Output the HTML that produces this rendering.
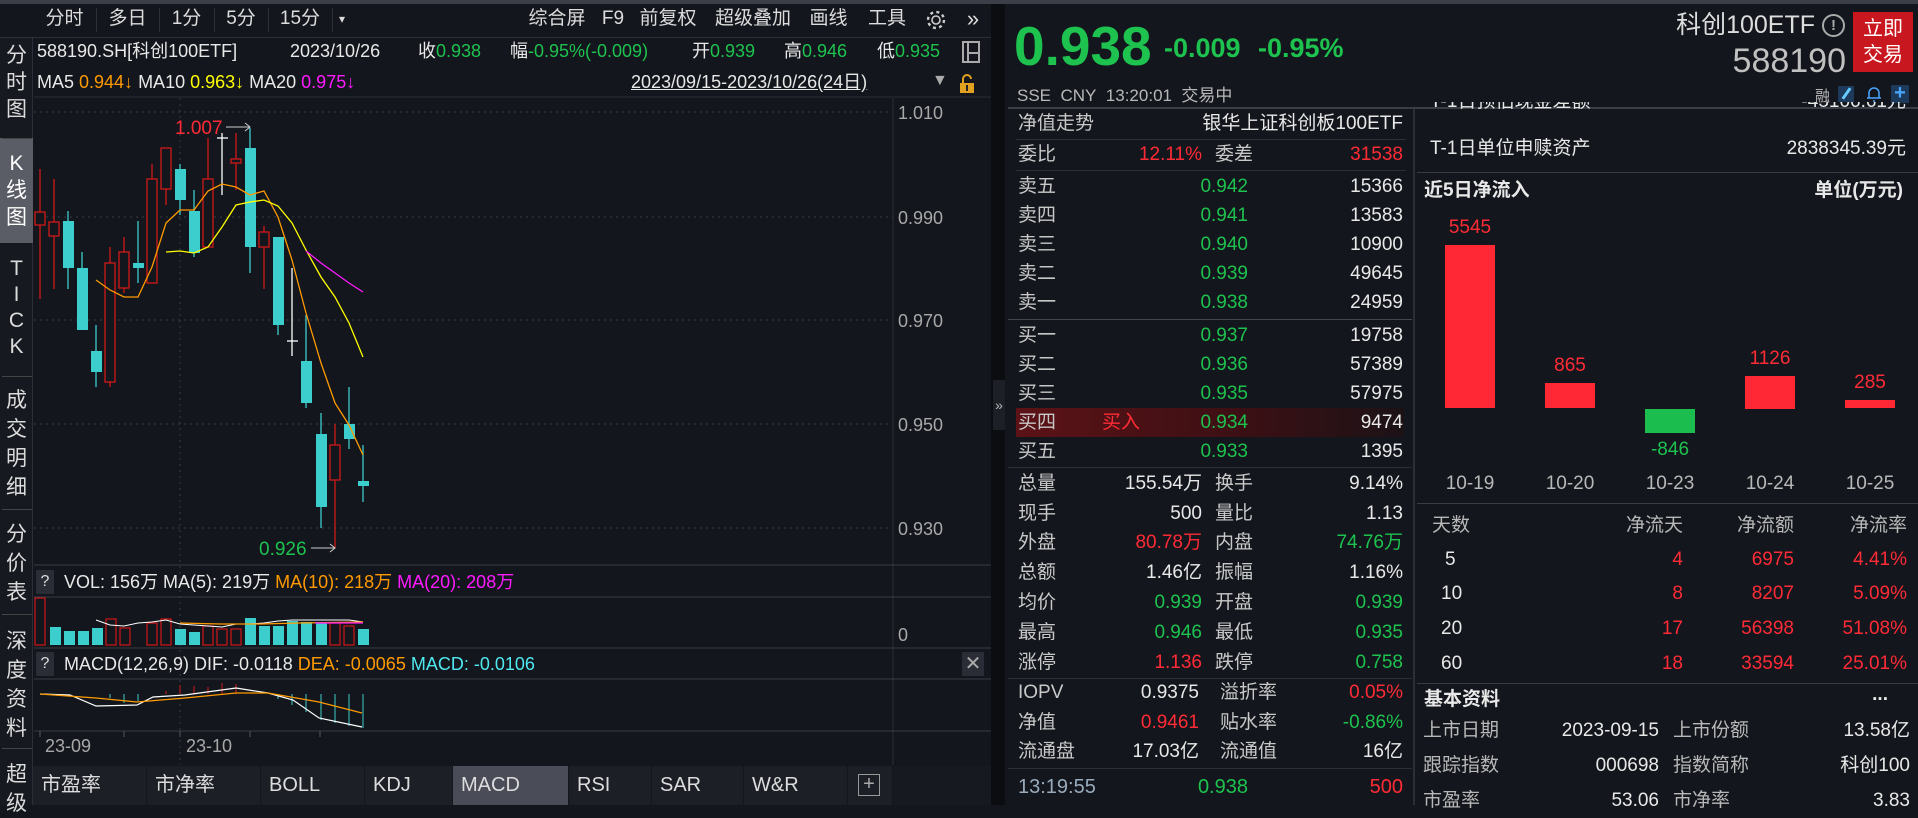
<!DOCTYPE html>
<html><head><meta charset="utf-8"><style>
*{margin:0;padding:0;box-sizing:border-box}
body{width:1918px;height:805px;background:#13161c;color:#d6d6d6;font-family:"Liberation Sans","Noto Sans CJK SC",sans-serif;position:relative;overflow:hidden}
.a{position:absolute;white-space:nowrap}
.g{color:#1ec24f}.r{color:#ff2b36}.w{color:#e8e8e8}.gy{color:#b8b8b8}.o{color:#ff9a00}.y{color:#ffff00}.m{color:#ff1aff}.c{color:#50e8f0}
.row{position:absolute;left:1005px;width:410px;height:30px;line-height:30px;font-size:19px}
.row span{position:absolute}
.row .l{left:13px;color:#c8c8c8}
.row .v1{right:167px}
.row .v2{right:12px}
.row .l2{left:210px;color:#c8c8c8}
.row .s1{right:213px}
.tb{position:absolute;top:4px;height:30px;line-height:30px;font-size:19px;color:#dcdcdc;text-align:center}
.side{position:absolute;left:0;width:33px;font-size:21px;color:#dcdcdc;text-align:center;line-height:27px}
.tab{position:absolute;top:766px;height:39px;line-height:39px;font-size:20px;color:#dcdcdc;background:#1c1f26;padding-left:8px}
.rt{position:absolute;font-size:19px;line-height:30px;white-space:nowrap}
</style></head><body>

<!-- top strip -->
<div class="a" style="left:0;top:0;width:1918px;height:4px;background:#3c3f48"></div>
<div class="a" style="left:0;top:37px;width:991px;height:1px;background:#2c2f37"></div>

<!-- toolbar -->
<div class="tb" style="left:33px;width:63px">分时</div>
<div class="tb" style="left:96px;width:63px">多日</div>
<div class="tb" style="left:159px;width:55px">1分</div>
<div class="tb" style="left:214px;width:54px">5分</div>
<div class="tb" style="left:268px;width:64px">15分</div>
<div class="tb" style="left:332px;width:20px;font-size:12px">▾</div>
<div class="a" style="left:96px;top:8px;width:1px;height:24px;background:#2c2f37"></div>
<div class="a" style="left:159px;top:8px;width:1px;height:24px;background:#2c2f37"></div>
<div class="a" style="left:214px;top:8px;width:1px;height:24px;background:#2c2f37"></div>
<div class="a" style="left:268px;top:8px;width:1px;height:24px;background:#2c2f37"></div>
<div class="a" style="left:332px;top:8px;width:1px;height:24px;background:#2c2f37"></div>
<div class="tb" style="left:520px;width:74px">综合屏</div>
<div class="tb" style="left:596px;width:34px">F9</div>
<div class="tb" style="left:631px;width:74px">前复权</div>
<div class="tb" style="left:706px;width:94px">超级叠加</div>
<div class="tb" style="left:802px;width:53px">画线</div>
<div class="tb" style="left:858px;width:58px">工具</div>
<svg class="a" style="left:925px;top:9px" width="22" height="22" viewBox="0 0 22 22"><circle cx="11" cy="11" r="4" fill="none" stroke="#ccc" stroke-width="1.6"/><circle cx="11" cy="11" r="8" fill="none" stroke="#ccc" stroke-width="2.4" stroke-dasharray="3 3.3"/></svg>
<div class="tb" style="left:958px;width:30px;font-size:22px">»</div>

<!-- sidebar -->
<div class="a" style="left:0;top:38px;width:33px;height:767px;background:#16191f;border-right:1px solid #2c2f37"></div>
<div class="side" style="top:42px">分<br>时<br>图</div>
<div class="a" style="left:0;top:138px;width:33px;height:105px;background:#5a5d66"></div>
<div class="side" style="top:150px;color:#fff">K<br>线<br>图</div>
<div class="side" style="top:256px;line-height:26px">T<br>I<br>C<br>K</div>
<div class="side" style="top:386px;line-height:29px">成<br>交<br>明<br>细</div>
<div class="side" style="top:520px;line-height:29px">分<br>价<br>表</div>
<div class="side" style="top:627px;line-height:29px">深<br>度<br>资<br>料</div>
<div class="side" style="top:760px;line-height:29px">超<br>级</div>
<div class="a" style="left:2px;top:138px;width:30px;height:1px;background:#444"></div>
<div class="a" style="left:2px;top:376px;width:30px;height:1px;background:#444"></div>
<div class="a" style="left:2px;top:509px;width:30px;height:1px;background:#444"></div>
<div class="a" style="left:2px;top:614px;width:30px;height:1px;background:#444"></div>
<div class="a" style="left:2px;top:748px;width:30px;height:1px;background:#444"></div>

<!-- info rows -->
<div class="a w" style="left:37px;top:40px;font-size:18px;line-height:22px">588190.SH[科创100ETF]</div>
<div class="a w" style="left:290px;top:40px;font-size:18px;line-height:22px">2023/10/26</div>
<div class="a w" style="left:418px;top:40px;font-size:18px;line-height:22px">收<span class="g">0.938</span></div>
<div class="a w" style="left:510px;top:40px;font-size:18px;line-height:22px">幅<span class="g">-0.95%(-0.009)</span></div>
<div class="a w" style="left:692px;top:40px;font-size:18px;line-height:22px">开<span class="g">0.939</span></div>
<div class="a w" style="left:784px;top:40px;font-size:18px;line-height:22px">高<span class="g">0.946</span></div>
<div class="a w" style="left:877px;top:40px;font-size:18px;line-height:22px">低<span class="g">0.935</span></div>
<svg class="a" style="left:962px;top:41px" width="18" height="22"><rect x="1" y="1" width="16" height="20" fill="none" stroke="#aaa" stroke-width="2"/><line x1="6" y1="1" x2="6" y2="21" stroke="#aaa" stroke-width="2"/><line x1="6" y1="12" x2="17" y2="12" stroke="#aaa" stroke-width="2"/></svg>
<div class="a w" style="left:37px;top:71px;font-size:18px;line-height:22px">MA5 <span class="o">0.944↓</span> MA10 <span class="y">0.963↓</span> MA20 <span class="m">0.975↓</span></div>
<div class="a w" style="left:631px;top:71px;font-size:18px;line-height:22px;text-decoration:underline">2023/09/15-2023/10/26(24日)</div>
<div class="a" style="left:932px;top:72px;font-size:16px;color:#aaa">▼</div>
<svg class="a" style="left:959px;top:74px" width="16" height="20"><path d="M4 9 V5 a4 4 0 0 1 8 0" fill="none" stroke="#e0a020" stroke-width="2"/><rect x="1" y="9" width="14" height="10" fill="#e0a020"/><rect x="7" y="11" width="2" height="6" fill="#222"/></svg>

<!-- chart -->
<svg class="a" style="left:0;top:0" width="991" height="805">
<g stroke="#3a3d45" stroke-dasharray="2 4" stroke-width="1">
<line x1="34" y1="112" x2="893" y2="112"/><line x1="34" y1="217" x2="893" y2="217"/><line x1="34" y1="320" x2="893" y2="320"/><line x1="34" y1="424" x2="893" y2="424"/><line x1="34" y1="528" x2="893" y2="528"/>
<line x1="180" y1="98" x2="180" y2="765"/>
</g>
<line x1="893" y1="98" x2="893" y2="765" stroke="#2c2f37"/>
<line x1="34" y1="97" x2="991" y2="97" stroke="#2c2f37"/>
<line x1="34" y1="565" x2="991" y2="565" stroke="#3a3d45"/>
<line x1="34" y1="597" x2="991" y2="597" stroke="#3a3d45"/>
<line x1="34" y1="648" x2="991" y2="648" stroke="#3a3d45"/>
<line x1="34" y1="679" x2="991" y2="679" stroke="#3a3d45"/>
<line x1="34" y1="731" x2="991" y2="731" stroke="#3a3d45"/>
<g font-size="18" fill="#a8a8a8" font-family="Liberation Sans,sans-serif">
<text x="898" y="119">1.010</text><text x="898" y="224">0.990</text><text x="898" y="327">0.970</text><text x="898" y="431">0.950</text><text x="898" y="535">0.930</text>
<text x="898" y="641">0</text>
<text x="45" y="752">23-09</text><text x="186" y="752">23-10</text>
</g>
<g stroke="#555" ><line x1="40" y1="731" x2="40" y2="737"/><line x1="124" y1="731" x2="124" y2="737"/><line x1="180" y1="731" x2="180" y2="737"/><line x1="250" y1="731" x2="250" y2="737"/><line x1="320" y1="731" x2="320" y2="737"/></g>
<!-- candles -->
<g stroke-width="1.3">
<line x1="40" y1="169" x2="40" y2="299" stroke="#d01818"/><rect x="35" y="212" width="10" height="13" fill="#13161c" stroke="#d01818"/>
<line x1="54" y1="179" x2="54" y2="289" stroke="#d01818"/><rect x="49" y="222" width="10" height="14" fill="#13161c" stroke="#d01818"/>
<line x1="68" y1="211" x2="68" y2="289" stroke="#3ccdcd"/><rect x="63" y="221" width="11" height="47" fill="#3ccdcd"/>
<line x1="82" y1="252" x2="82" y2="330" stroke="#3ccdcd"/><rect x="77" y="268" width="11" height="62" fill="#3ccdcd"/>
<line x1="96" y1="325" x2="96" y2="387" stroke="#3ccdcd"/><rect x="91" y="351" width="11" height="21" fill="#3ccdcd"/>
<line x1="110" y1="247" x2="110" y2="387" stroke="#d01818"/><rect x="105" y="263" width="10" height="119" fill="#13161c" stroke="#d01818"/>
<line x1="124" y1="237" x2="124" y2="293" stroke="#d01818"/><rect x="119" y="252" width="10" height="36" fill="#13161c" stroke="#d01818"/>
<line x1="138" y1="221" x2="138" y2="283" stroke="#3ccdcd"/><rect x="133" y="263" width="11" height="5" fill="#3ccdcd"/>
<line x1="152" y1="164" x2="152" y2="283" stroke="#d01818"/><rect x="147" y="179" width="10" height="104" fill="#13161c" stroke="#d01818"/>
<line x1="166" y1="148" x2="166" y2="205" stroke="#d01818"/><rect x="161" y="148" width="10" height="41" fill="#13161c" stroke="#d01818"/>
<line x1="180" y1="164" x2="180" y2="215" stroke="#3ccdcd"/><rect x="175" y="169" width="11" height="31" fill="#3ccdcd"/>
<line x1="194" y1="190" x2="194" y2="257" stroke="#3ccdcd"/><rect x="189" y="211" width="11" height="42" fill="#3ccdcd"/>
<line x1="208" y1="138" x2="208" y2="247" stroke="#d01818"/><rect x="203" y="179" width="10" height="68" fill="#13161c" stroke="#d01818"/>
<line x1="222" y1="133" x2="222" y2="195" stroke="#fff"/><line x1="217" y1="138" x2="228" y2="138" stroke="#fff"/>
<line x1="236" y1="133" x2="236" y2="190" stroke="#d01818"/><rect x="231" y="159" width="10" height="4" fill="#13161c" stroke="#d01818"/>
<line x1="250" y1="128" x2="250" y2="273" stroke="#3ccdcd"/><rect x="245" y="148" width="11" height="99" fill="#3ccdcd"/>
<line x1="264" y1="226" x2="264" y2="289" stroke="#d01818"/><rect x="259" y="232" width="10" height="15" fill="#13161c" stroke="#d01818"/>
<line x1="278" y1="237" x2="278" y2="335" stroke="#3ccdcd"/><rect x="273" y="237" width="11" height="88" fill="#3ccdcd"/>
<line x1="292" y1="268" x2="292" y2="356" stroke="#fff"/><line x1="287" y1="341" x2="298" y2="341" stroke="#fff"/>
<line x1="306" y1="315" x2="306" y2="408" stroke="#3ccdcd"/><rect x="301" y="361" width="11" height="42" fill="#3ccdcd"/>
<line x1="321" y1="413" x2="321" y2="528" stroke="#3ccdcd"/><rect x="316" y="434" width="11" height="73" fill="#3ccdcd"/>
<line x1="335" y1="424" x2="335" y2="548" stroke="#d01818"/><rect x="330" y="445" width="10" height="35" fill="#13161c" stroke="#d01818"/>
<line x1="349" y1="387" x2="349" y2="449" stroke="#3ccdcd"/><rect x="344" y="424" width="11" height="15" fill="#3ccdcd"/>
<line x1="363" y1="445" x2="363" y2="502" stroke="#3ccdcd"/><rect x="358" y="481" width="11" height="5" fill="#3ccdcd"/>
</g>
<polyline fill="none" stroke="#ff9a00" stroke-width="1.3" points="96,280 110,290 124,297 138,297 152,267 166,223 180,210 194,210 208,191 222,184 236,187 250,195 264,191 278,217 292,260 306,313 321,363 335,403 349,425 363,455"/>
<polyline fill="none" stroke="#ffff00" stroke-width="1.3" points="166,252 180,251 194,253 208,247 222,227 236,205 250,202 264,200 278,206 292,223 306,250 321,277 335,297 349,323 363,357"/>
<polyline fill="none" stroke="#ff1aff" stroke-width="1.3" points="306,251 321,263 335,273 349,283 363,292"/>
<text x="175" y="134" font-size="19" fill="#ff2b36" font-family="Liberation Sans,sans-serif">1.007</text>
<path d="M226 127 H250 M245 123 L250 127 L245 131" stroke="#ccc" fill="none"/>
<text x="259" y="555" font-size="19" fill="#1ec24f" font-family="Liberation Sans,sans-serif">0.926</text>
<path d="M311 548 H335 M330 544 L335 548 L330 552" stroke="#ccc" fill="none"/>
<!-- volume -->
<g stroke-width="1.2">
<rect x="35" y="598" width="10" height="47" fill="none" stroke="#d01818"/>
<rect x="50" y="627" width="11" height="18" fill="#3ccdcd"/>
<rect x="64" y="631" width="11" height="14" fill="#3ccdcd"/>
<rect x="78" y="631" width="11" height="14" fill="#3ccdcd"/>
<rect x="92" y="628" width="11" height="17" fill="#3ccdcd"/>
<rect x="106" y="619" width="10" height="26" fill="none" stroke="#d01818"/>
<rect x="120" y="628" width="10" height="17" fill="none" stroke="#d01818"/>
<rect x="147" y="623" width="10" height="22" fill="none" stroke="#d01818"/>
<rect x="161" y="619" width="10" height="26" fill="none" stroke="#d01818"/>
<rect x="175" y="629" width="11" height="16" fill="#3ccdcd"/>
<rect x="189" y="632" width="11" height="13" fill="#3ccdcd"/>
<rect x="203" y="626" width="10" height="19" fill="none" stroke="#d01818"/>
<rect x="217" y="629" width="10" height="16" fill="none" stroke="#d01818"/>
<rect x="231" y="629" width="10" height="16" fill="none" stroke="#d01818"/>
<rect x="245" y="618" width="11" height="27" fill="#3ccdcd"/>
<rect x="259" y="626" width="11" height="19" fill="#3ccdcd"/>
<rect x="273" y="626" width="11" height="19" fill="#3ccdcd"/>
<rect x="287" y="621" width="11" height="24" fill="#3ccdcd"/>
<rect x="301" y="622" width="11" height="23" fill="#3ccdcd"/>
<rect x="316" y="622" width="11" height="23" fill="#3ccdcd"/>
<rect x="330" y="623" width="10" height="22" fill="none" stroke="#d01818"/>
<rect x="344" y="626" width="10" height="19" fill="none" stroke="#d01818"/>
<rect x="358" y="629" width="11" height="16" fill="#3ccdcd"/>
</g>
<polyline fill="none" stroke="#fff" stroke-width="1" points="96,620 110,625 124,626 138,623 152,622 166,620 180,624 194,625 208,626 222,627 236,624 250,624 264,623 278,621 292,620 306,620 321,620 335,620 349,620 363,622"/>
<polyline fill="none" stroke="#ff9a00" stroke-width="1.2" points="180,623 220,624 260,624 300,623 363,622"/>
<polyline fill="none" stroke="#ff1aff" stroke-width="1.2" points="315,623 363,623"/>
<!-- macd -->
<g stroke-width="1">
<line x1="110" y1="694" x2="110" y2="698" stroke="#3ccdcd"/><line x1="124" y1="694" x2="124" y2="703" stroke="#3ccdcd"/><line x1="138" y1="694" x2="138" y2="701" stroke="#3ccdcd"/>
<line x1="166" y1="694" x2="166" y2="691" stroke="#d01818"/><line x1="180" y1="694" x2="180" y2="685" stroke="#d01818"/><line x1="194" y1="694" x2="194" y2="686" stroke="#d01818"/><line x1="208" y1="694" x2="208" y2="687" stroke="#d01818"/><line x1="222" y1="694" x2="222" y2="683" stroke="#d01818"/><line x1="236" y1="694" x2="236" y2="684" stroke="#d01818"/>
<line x1="278" y1="694" x2="278" y2="699" stroke="#3ccdcd"/><line x1="292" y1="694" x2="292" y2="705" stroke="#3ccdcd"/><line x1="306" y1="694" x2="306" y2="712" stroke="#3ccdcd"/><line x1="321" y1="694" x2="321" y2="720" stroke="#3ccdcd"/><line x1="335" y1="694" x2="335" y2="723" stroke="#3ccdcd"/><line x1="349" y1="694" x2="349" y2="726" stroke="#3ccdcd"/><line x1="363" y1="694" x2="363" y2="728" stroke="#3ccdcd"/>
</g>
<polyline fill="none" stroke="#fff" stroke-width="1.2" points="40,694 70,695 96,706 137,705 153,697 185,695 236,688 268,693 293,700 319,718 362,727"/>
<polyline fill="none" stroke="#ff9a00" stroke-width="1.2" points="40,694 96,698 137,702 185,698 236,693 268,693 319,702 362,713"/>
</svg>

<!-- VOL / MACD headers -->
<div class="a" style="left:36px;top:570px;width:18px;height:24px;background:#2a2d35;color:#ddd;font-size:16px;text-align:center;line-height:24px">?</div>
<div class="a w" style="left:64px;top:570px;font-size:18px;line-height:24px">VOL: 156万 MA(5): 219万 <span class="o">MA(10): 218万</span> <span class="m">MA(20): 208万</span></div>
<div class="a" style="left:36px;top:652px;width:18px;height:24px;background:#2a2d35;color:#ddd;font-size:16px;text-align:center;line-height:24px">?</div>
<div class="a w" style="left:64px;top:652px;font-size:18px;line-height:24px">MACD(12,26,9) DIF: -0.0118 <span class="o">DEA: -0.0065</span> <span class="c">MACD: -0.0106</span></div>
<div class="a" style="left:962px;top:652px;width:22px;height:24px;background:#2a2d35;color:#aaa;font-size:20px;text-align:center;line-height:24px">✕</div>

<!-- tabs -->
<div class="tab" style="left:33px;width:113px">市盈率</div>
<div class="tab" style="left:147px;width:113px">市净率</div>
<div class="tab" style="left:261px;width:103px">BOLL</div>
<div class="tab" style="left:365px;width:87px">KDJ</div>
<div class="tab" style="left:453px;width:115px;background:#4a4d57">MACD</div>
<div class="tab" style="left:569px;width:82px">RSI</div>
<div class="tab" style="left:652px;width:91px">SAR</div>
<div class="tab" style="left:744px;width:103px">W&amp;R</div>
<div class="tab" style="left:848px;width:44px"><div style="position:absolute;left:10px;top:8px;width:22px;height:22px;border:1px solid #999;color:#aaa;line-height:19px;text-align:center;font-size:20px">+</div></div>
<div class="tab" style="left:893px;width:98px;background:#16191f"></div>

<!-- divider column -->
<div class="a" style="left:991px;top:4px;width:14px;height:801px;background:#0b0d10"></div>
<div class="a" style="left:993px;top:380px;width:12px;height:50px;background:#1c1f25;color:#bbb;font-size:14px;line-height:50px;text-align:center">»</div>

<!-- right header -->
<div class="a g" style="left:1014px;top:16px;font-size:55px;font-weight:bold;line-height:60px">0.938</div>
<div class="a g" style="left:1164px;top:32px;font-size:27px;font-weight:bold;line-height:32px">-0.009</div>
<div class="a g" style="left:1258px;top:32px;font-size:27px;font-weight:bold;line-height:32px">-0.95%</div>
<div class="a gy" style="left:1017px;top:86px;font-size:17px;line-height:20px">SSE&nbsp; CNY&nbsp; 13:20:01&nbsp; 交易中</div>
<div class="a" style="right:103px;top:10px;font-size:25px;line-height:30px;color:#ddd">科创100ETF</div>
<div class="a" style="left:1822px;top:14px;width:23px;height:23px;border:2px solid #aaa;border-radius:50%;color:#aaa;font-size:15px;line-height:19px;text-align:center;font-weight:bold">!</div>
<div class="a" style="right:72px;top:42px;font-size:34px;line-height:38px;color:#c0c0c0">588190</div>
<div class="a" style="left:1853px;top:12px;width:60px;height:60px;background:#c8171e;color:#fff;font-size:20px;line-height:26px;text-align:center;padding-top:4px">立即<br>交易</div>
<div class="a gy" style="left:1815px;top:85px;font-size:15px">融</div>
<div class="a" style="left:1838px;top:86px;width:16px;height:16px;background:#1e3a5a"><div style="position:absolute;left:7px;top:1px;width:3px;height:13px;background:#6cf;transform:rotate(35deg)"></div></div>
<svg class="a" style="left:1866px;top:85px" width="16" height="18"><path d="M3 13 V8 a5 5 0 0 1 10 0 V13 H3 M1 13 H15 M7 16 H9" stroke="#49a6ff" fill="none" stroke-width="1.5"/></svg>
<div class="a" style="left:1891px;top:85px;width:18px;height:18px;background:#1e3a5a;color:#49a6ff;font-size:20px;line-height:17px;text-align:center;font-weight:bold">+</div>
<div class="a" style="left:1008px;top:107px;width:910px;height:2px;background:#3a3d45"></div>
<div class="a" style="left:1413px;top:109px;width:2px;height:696px;background:#2c2f37"></div>

<!-- middle rows -->
<div class="row" style="top:109px"><span class="l">净值走势</span><span class="v2 w">银华上证科创板100ETF</span></div>
<div class="a" style="left:1016px;top:139px;width:390px;height:1px;background:#2c2f37"></div>
<div class="row" style="top:140px"><span class="l">委比</span><span class="s1 r">12.11%</span><span class="l2">委差</span><span class="v2 r">31538</span></div>
<div class="a" style="left:1016px;top:170px;width:390px;height:1px;background:#2c2f37"></div>
<div class="row" style="top:172px"><span class="l">卖五</span><span class="v1 g">0.942</span><span class="v2 w">15366</span></div>
<div class="row" style="top:201px"><span class="l">卖四</span><span class="v1 g">0.941</span><span class="v2 w">13583</span></div>
<div class="row" style="top:230px"><span class="l">卖三</span><span class="v1 g">0.940</span><span class="v2 w">10900</span></div>
<div class="row" style="top:259px"><span class="l">卖二</span><span class="v1 g">0.939</span><span class="v2 w">49645</span></div>
<div class="row" style="top:288px"><span class="l">卖一</span><span class="v1 g">0.938</span><span class="v2 w">24959</span></div>
<div class="a" style="left:1008px;top:319px;width:404px;height:1px;background:#44474f"></div>
<div class="row" style="top:321px"><span class="l">买一</span><span class="v1 g">0.937</span><span class="v2 w">19758</span></div>
<div class="row" style="top:350px"><span class="l">买二</span><span class="v1 g">0.936</span><span class="v2 w">57389</span></div>
<div class="row" style="top:379px"><span class="l">买三</span><span class="v1 g">0.935</span><span class="v2 w">57975</span></div>
<div class="a" style="left:1016px;top:408px;width:388px;height:29px;background:linear-gradient(90deg,#5c1216,#3a1014 60%,#1c1216)"></div>
<div class="row" style="top:408px"><span class="l">买四</span><span class="r" style="left:97px">买入</span><span class="v1 g">0.934</span><span class="v2 w">9474</span></div>
<div class="row" style="top:437px"><span class="l">买五</span><span class="v1 g">0.933</span><span class="v2 w">1395</span></div>
<div class="a" style="left:1008px;top:467px;width:404px;height:1px;background:#2c2f37"></div>
<div class="row" style="top:469px"><span class="l">总量</span><span class="s1 w">155.54万</span><span class="l2">换手</span><span class="v2 w">9.14%</span></div>
<div class="row" style="top:499px"><span class="l">现手</span><span class="s1 w">500</span><span class="l2">量比</span><span class="v2 w">1.13</span></div>
<div class="row" style="top:528px"><span class="l">外盘</span><span class="s1 r">80.78万</span><span class="l2">内盘</span><span class="v2 g">74.76万</span></div>
<div class="row" style="top:558px"><span class="l">总额</span><span class="s1 w">1.46亿</span><span class="l2">振幅</span><span class="v2 w">1.16%</span></div>
<div class="row" style="top:588px"><span class="l">均价</span><span class="s1 g">0.939</span><span class="l2">开盘</span><span class="v2 g">0.939</span></div>
<div class="row" style="top:618px"><span class="l">最高</span><span class="s1 g">0.946</span><span class="l2">最低</span><span class="v2 g">0.935</span></div>
<div class="row" style="top:648px"><span class="l">涨停</span><span class="s1 r">1.136</span><span class="l2">跌停</span><span class="v2 g">0.758</span></div>
<div class="a" style="left:1008px;top:678px;width:404px;height:1px;background:#2c2f37"></div>
<div class="row" style="top:678px"><span class="l">IOPV</span><span class="w" style="right:216px">0.9375</span><span class="l" style="left:215px">溢折率</span><span class="v2 r">0.05%</span></div>
<div class="row" style="top:708px"><span class="l">净值</span><span class="r" style="right:216px">0.9461</span><span class="l" style="left:215px">贴水率</span><span class="v2 g">-0.86%</span></div>
<div class="row" style="top:737px"><span class="l">流通盘</span><span class="w" style="right:216px">17.03亿</span><span class="l" style="left:215px">流通值</span><span class="v2 w">16亿</span></div>
<div class="a" style="left:1008px;top:768px;width:404px;height:1px;background:#2c2f37"></div>
<div class="row" style="top:772px;font-size:20px"><span class="l" style="color:#9ab">13:19:55</span><span class="v1 g">0.938</span><span class="v2 r">500</span></div>

<!-- right panel -->
<div class="rt w" style="left:1430px;top:102px;height:15px;overflow:hidden;line-height:30px;padding-top:0"><div style="margin-top:-15px">T-1日预估现金差额</div></div>
<div class="rt w" style="right:12px;top:102px;height:15px;overflow:hidden"><div style="margin-top:-15px">-45106.61元</div></div>
<div class="rt w" style="left:1430px;top:134px">T-1日单位申赎资产</div>
<div class="rt w" style="right:12px;top:134px">2838345.39元</div>
<div class="a" style="left:1417px;top:172px;width:501px;height:1px;background:#3a3d45"></div>
<div class="rt w" style="left:1424px;top:176px;font-weight:bold">近5日净流入</div>
<div class="rt w" style="right:15px;top:176px;font-weight:bold">单位(万元)</div>
<div class="a" style="left:1445px;top:245px;width:50px;height:163px;background:#ff2834"></div>
<div class="a" style="left:1545px;top:383px;width:50px;height:25px;background:#ff2834"></div>
<div class="a" style="left:1645px;top:409px;width:50px;height:24px;background:#1bbd4e"></div>
<div class="a" style="left:1745px;top:376px;width:50px;height:33px;background:#ff2834"></div>
<div class="a" style="left:1845px;top:400px;width:50px;height:8px;background:#ff2834"></div>
<div class="rt r" style="left:1445px;width:50px;text-align:center;top:213px">5545</div>
<div class="rt r" style="left:1545px;width:50px;text-align:center;top:351px">865</div>
<div class="rt g" style="left:1640px;width:60px;text-align:center;top:435px">-846</div>
<div class="rt r" style="left:1745px;width:50px;text-align:center;top:344px">1126</div>
<div class="rt r" style="left:1845px;width:50px;text-align:center;top:368px">285</div>
<div class="rt gy" style="left:1440px;width:60px;text-align:center;top:469px">10-19</div>
<div class="rt gy" style="left:1540px;width:60px;text-align:center;top:469px">10-20</div>
<div class="rt gy" style="left:1640px;width:60px;text-align:center;top:469px">10-23</div>
<div class="rt gy" style="left:1740px;width:60px;text-align:center;top:469px">10-24</div>
<div class="rt gy" style="left:1840px;width:60px;text-align:center;top:469px">10-25</div>
<div class="a" style="left:1417px;top:503px;width:501px;height:1px;background:#3a3d45"></div>
<div class="rt gy" style="left:1432px;top:511px">天数</div>
<div class="rt gy" style="right:235px;top:511px">净流天</div>
<div class="rt gy" style="right:124px;top:511px">净流额</div>
<div class="rt gy" style="right:11px;top:511px">净流率</div>
<div class="rt w" style="left:1445px;top:545px">5</div><div class="rt r" style="right:235px;top:545px">4</div><div class="rt r" style="right:124px;top:545px">6975</div><div class="rt r" style="right:11px;top:545px">4.41%</div>
<div class="rt w" style="left:1441px;top:579px">10</div><div class="rt r" style="right:235px;top:579px">8</div><div class="rt r" style="right:124px;top:579px">8207</div><div class="rt r" style="right:11px;top:579px">5.09%</div>
<div class="rt w" style="left:1441px;top:614px">20</div><div class="rt r" style="right:235px;top:614px">17</div><div class="rt r" style="right:124px;top:614px">56398</div><div class="rt r" style="right:11px;top:614px">51.08%</div>
<div class="rt w" style="left:1441px;top:649px">60</div><div class="rt r" style="right:235px;top:649px">18</div><div class="rt r" style="right:124px;top:649px">33594</div><div class="rt r" style="right:11px;top:649px">25.01%</div>
<div class="a" style="left:1417px;top:683px;width:501px;height:1px;background:#3a3d45"></div>
<div class="rt w" style="left:1424px;top:685px;font-weight:bold">基本资料</div>
<div class="rt w" style="right:30px;top:680px;font-weight:bold">...</div>
<div class="rt gy" style="left:1423px;top:716px">上市日期</div><div class="rt w" style="right:259px;top:716px">2023-09-15</div><div class="rt gy" style="left:1673px;top:716px">上市份额</div><div class="rt w" style="right:8px;top:716px">13.58亿</div>
<div class="rt gy" style="left:1423px;top:751px">跟踪指数</div><div class="rt w" style="right:259px;top:751px">000698</div><div class="rt gy" style="left:1673px;top:751px">指数简称</div><div class="rt w" style="right:8px;top:751px">科创100</div>
<div class="rt gy" style="left:1423px;top:786px">市盈率</div><div class="rt w" style="right:259px;top:786px">53.06</div><div class="rt gy" style="left:1673px;top:786px">市净率</div><div class="rt w" style="right:8px;top:786px">3.83</div>
</body></html>
